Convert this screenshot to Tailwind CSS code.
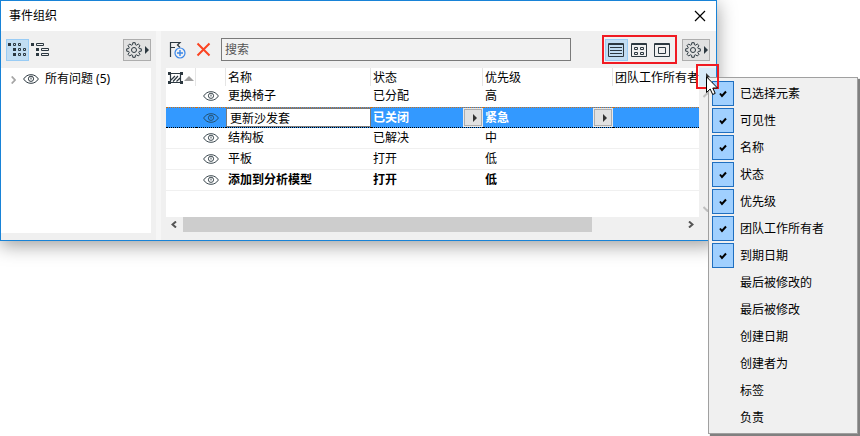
<!DOCTYPE html>
<html lang="zh-CN">
  <head>
    <meta charset="UTF-8" />
    <meta name="viewport" content="width=device-width, initial-scale=1.0" />
    <title>事件组织</title>
    <script src="https://cdn.jsdelivr.net/npm/@tailwindcss/browser@4"></script>
  </head>
  <body class="relative min-h-screen bg-white overflow-hidden font-['Noto_Sans','Noto_Sans_CJK_SC',sans-serif] text-xs text-black">
    <!-- shared icons -->
    <svg class="hidden">
      <symbol id="eye" viewBox="0 0 16 10">
        <path d="M.6 5C2.6 2 5 .7 8 .7S13.400 2 15.400 5C13.400 8 11 9.300 8 9.300S2.600 8 .6 5Z" fill="none" stroke="currentColor" />
        <circle cx="8" cy="4.800" r="2.600" fill="none" stroke="currentColor" />
        <path d="M8 3.500v2" stroke="currentColor" />
      </symbol>
      <symbol id="gear" viewBox="0 0 16 16">
        <path d="M13.300 6.600L15.300 6.800V9.200L13.300 9.400L12.800 10.700L14 12.300L12.300 14L10.700 12.800L9.400 13.300L9.200 15.300H6.800L6.600 13.300L5.300 12.800L3.700 14L2 12.300L3.200 10.700L2.700 9.400L.7 9.200V6.800L2.700 6.600L3.200 5.300L2 3.700L3.700 2L5.300 3.200L6.600 2.700L6.800 .7H9.200L9.400 2.700L10.700 3.200L12.300 2L14 3.700L12.800 5.300Z" fill="none" stroke="currentColor" stroke-linejoin="round" />
        <circle cx="8" cy="8" r="2.500" fill="none" stroke="currentColor" />
      </symbol>
      <symbol id="tri" viewBox="0 0 4 8">
        <path d="M0 0L4 4L0 8Z" fill="currentColor" />
      </symbol>
      <symbol id="check" viewBox="0 0 8 8">
        <path d="M1 3.500L3 6L7 1.500" fill="none" stroke="#000" stroke-width="2" />
      </symbol>
    </svg>

    <main class="mr-[143px] border border-[#1883d7] bg-[#f0f0f0] shadow-[0_4px_18px_rgba(0,0,0,0.4)]">
      <header class="flex h-[30px] items-center justify-between bg-white pl-2 pr-2">
        <h1>事件组织</h1>
        <button aria-label="关闭" class="p-0.5">
          <svg class="size-3" viewBox="0 0 12 12"><path d="M1 1L11 11M11 1L1 11" stroke="#000" stroke-width="1.200" /></svg>
        </button>
      </header>

      <div class="flex text-[#2c3840]">
        <!-- tree side -->
        <section class="flex w-[155px] flex-col pr-[5px]">
          <div class="flex h-[37px] items-center pl-[5px]">
            <button aria-label="树视图" class="flex h-[22px] w-[23px] items-center justify-center border border-[#99ccf5] bg-[#c2ddf2]">
              <svg class="h-[13px] w-[19px]" viewBox="0 0 19 13">
                <path d="M0 0h3v3h-3zM5 5h3v3h-3zM5 10h3v3h-3z" fill="currentColor" />
                <path d="M5.500 .5h2v2h-2zM10.500 .5h2v2h-2zM10.500 5.500h2v2h-2zM15.500 5.500h2v2h-2zM10.500 10.500h2v2h-2zM15.500 10.500h2v2h-2z" fill="none" stroke="currentColor" />
              </svg>
            </button>
            <button aria-label="列表视图" class="ml-0.5">
              <svg class="h-[13px] w-[18px]" viewBox="0 0 18 13">
                <path d="M0 0h3v3h-3zM5 5h3v3h-3zM5 10h3v3h-3z" fill="currentColor" />
                <path d="M5.500 .5h7v2h-7zM10.500 5.500h7v2h-7zM10.500 10.500h7v2h-7z" fill="none" stroke="currentColor" />
              </svg>
            </button>
            <button aria-label="树设置" class="ml-auto flex h-[22px] w-7 items-center justify-center gap-[3px] border border-[#adadad] bg-[#e1e1e1]">
              <svg class="size-4"><use href="#gear" /></svg>
              <svg class="h-2 w-1"><use href="#tri" /></svg>
            </button>
          </div>
          <div class="mb-[7px] flex-1 bg-white">
            <div class="flex h-[22px] items-center pl-2.5">
              <svg class="mt-0.5 h-2 w-[5px]" viewBox="0 0 5 8"><path d="M.7 .5L4 4L.7 7.500" fill="none" stroke="#a6a6a6" stroke-width="1.800" /></svg>
              <svg class="ml-[7px] h-2.5 w-4"><use href="#eye" /></svg>
              <span class="ml-1.5 text-black">所有问题 (5)</span>
            </div>
          </div>
        </section>

        <div class="w-[5px] bg-[#f6f6f6]"></div>

        <!-- issue list side -->
        <section class="min-w-0 flex-1 pb-2">
          <div class="flex h-[37px] items-center pl-2 pr-1.5">
            <button aria-label="新建问题">
              <svg class="h-[18px] w-[17px]" viewBox="0 0 17 18">
                <path d="M1.500 16V1.500H11L8.500 4L11 6.500M1.500 6.500H6" fill="none" stroke="currentColor" stroke-width="1.200" />
                <circle cx="11" cy="12" r="5" fill="#f0f0f0" stroke="#3a86e8" stroke-width="1.200" />
                <path d="M11 9v6M8 12h6" stroke="#3a86e8" stroke-width="1.400" />
              </svg>
            </button>
            <button aria-label="删除" class="ml-2.5">
              <svg class="size-[15px]" viewBox="0 0 15 15"><path d="M1.500 1.500L13.500 13.500M13.500 1.500L1.500 13.500" stroke="#fb4422" stroke-width="2" /></svg>
            </button>
            <input type="search" aria-label="搜索" placeholder="搜索" class="ml-2.5 h-[23px] min-w-0 flex-1 border border-[#7a7a7a] bg-[#f2f2f2] px-[3px] placeholder:text-[#555]" />
            <div class="ml-[31px] flex h-[29px] items-center border-2 border-[#f01a22] px-px">
              <button aria-label="列表" class="flex h-[22px] w-[23px] items-center justify-center border border-[#99ccf5] bg-[#c2ddf2]">
                <svg class="h-3.5 w-[17px]" viewBox="0 0 17 14">
                  <path d="M.5 .5h15v13h-15zM.5 1.500h15M2 4.500h12M2 7.500h12M2 10.500h12" fill="none" stroke="currentColor" />
                </svg>
              </button>
              <button aria-label="缩略图" class="flex w-[23px] justify-center">
                <svg class="h-3.5 w-[17px]" viewBox="0 0 17 14">
                  <path d="M.5 .5h15v13h-15zM.5 1.500h15M3.500 4.500h3v2h-3zM9.500 4.500h3v2h-3zM3.500 9.500h3v2h-3zM9.500 9.500h3v2h-3z" fill="none" stroke="currentColor" />
                </svg>
              </button>
              <button aria-label="单视图" class="flex w-[23px] justify-center">
                <svg class="h-3.5 w-[17px]" viewBox="0 0 17 14">
                  <path d="M.5 .5h15v13h-15zM.5 1.500h15M4.500 4.500h7v6h-7z" fill="none" stroke="currentColor" />
                </svg>
              </button>
            </div>
            <button aria-label="列表设置" class="ml-[5px] flex h-[22px] w-7 items-center justify-center gap-[3px] border border-[#adadad] bg-[#e1e1e1]">
              <svg class="size-4"><use href="#gear" /></svg>
              <svg class="h-2 w-1"><use href="#tri" /></svg>
            </button>
          </div>

          <div class="flex pl-[5px]">
            <div class="min-w-0 flex-1">
              <div class="bg-white pb-[26px] text-black">
                <table class="w-full table-fixed border-separate border-spacing-0 text-left leading-4 whitespace-nowrap [&_td]:h-[21px] [&_td]:p-0 [&_td]:pl-0.5 [&_th]:h-[18px] [&_th]:p-0 [&_th]:pt-0.5 [&_th]:pl-0.5 [&_th]:font-normal">
                  <colgroup>
                    <col class="w-[30px]" />
                    <col class="w-[30px]" />
                    <col class="w-[145px]" />
                    <col class="w-28" />
                    <col class="w-[130px]" />
                    <col />
                  </colgroup>
                  <thead>
                    <tr>
                      <th class="border-r border-[#e5e5e5]" aria-label="已选择元素">
                        <span class="flex items-center gap-px">
                          <svg class="h-3 w-[15px]" viewBox="0 0 15 12">
                            <path d="M2 1.500h11M2 10.500h11M2.500 2v8M12.500 2v8M3 8L7 4M5 9.500L10 4M8.500 9.500L12 6" fill="none" stroke="#2c3840" stroke-width="1.200" />
                            <path d="M0 0h3v3h-3zM12 0h3v3h-3zM0 9h3v3h-3zM12 9h3v3h-3z" fill="#2c3840" />
                          </svg>
                          <svg class="h-[5px] w-2.5" viewBox="0 0 10 5"><path d="M5 0L10 5H0Z" fill="#a0a0a0" /></svg>
                        </span>
                      </th>
                      <th class="border-r border-[#e5e5e5]" aria-label="可见性"></th>
                      <th class="border-r border-[#e5e5e5]">名称</th>
                      <th class="border-r border-[#e5e5e5]">状态</th>
                      <th class="border-r border-[#e5e5e5]">优先级</th>
                      <th>团队工作所有者</th>
                    </tr>
                  </thead>
                  <tbody>
                    <tr class="[&_td]:pb-0.5">
                      <td></td>
                      <td><svg class="ml-[5px] h-2.5 w-4 text-[#3c4950]"><use href="#eye" /></svg></td>
                      <td>更换椅子</td>
                      <td>已分配</td>
                      <td>高</td>
                      <td></td>
                    </tr>
                    <tr class="bg-[#3399ff] font-bold text-white [&_td]:border-y [&_td]:border-dotted [&_td]:border-t-[#c8701a] [&_td]:border-b-black">
                      <td></td>
                      <td><svg class="ml-[5px] h-2.5 w-4 text-[#24506f]"><use href="#eye" /></svg></td>
                      <td class="pl-0!">
                        <input type="text" aria-label="名称" value="更新沙发套" class="block h-[19px] w-full border border-[#7a7a7a] bg-white px-[3px] font-normal text-black" />
                      </td>
                      <td>
                        <div class="flex items-center justify-between pr-px">
                          已关闭
                          <button aria-label="选择状态" class="flex h-[17px] w-[18px] items-center justify-end border border-[#adadad] bg-[#e1e1e1] pr-1 text-[#333] outline outline-[#e8e8e8]"><svg class="h-2 w-1"><use href="#tri" /></svg></button>
                        </div>
                      </td>
                      <td>
                        <div class="flex items-center justify-between pr-px">
                          紧急
                          <button aria-label="选择优先级" class="flex h-[17px] w-[18px] items-center justify-end border border-[#adadad] bg-[#e1e1e1] pr-1 text-[#333] outline outline-[#e8e8e8]"><svg class="h-2 w-1"><use href="#tri" /></svg></button>
                        </div>
                      </td>
                      <td></td>
                    </tr>
                    <tr class="[&_td]:border-b [&_td]:border-[#f0f0f0]">
                      <td></td>
                      <td><svg class="ml-[5px] h-2.5 w-4 text-[#3c4950]"><use href="#eye" /></svg></td>
                      <td>结构板</td>
                      <td>已解决</td>
                      <td>中</td>
                      <td></td>
                    </tr>
                    <tr class="[&_td]:border-b [&_td]:border-[#f0f0f0]">
                      <td></td>
                      <td><svg class="ml-[5px] h-2.5 w-4 text-[#3c4950]"><use href="#eye" /></svg></td>
                      <td>平板</td>
                      <td>打开</td>
                      <td>低</td>
                      <td></td>
                    </tr>
                    <tr class="font-bold [&_td]:border-b [&_td]:border-[#f0f0f0]">
                      <td></td>
                      <td><svg class="ml-[5px] h-2.5 w-4 text-[#3c4950]"><use href="#eye" /></svg></td>
                      <td>添加到分析模型</td>
                      <td>打开</td>
                      <td>低</td>
                      <td></td>
                    </tr>
                  </tbody>
                </table>
              </div>
              <!-- horizontal scrollbar -->
              <div class="flex h-[15px] items-center pl-[5px] pr-[5px] text-[#555]">
                <svg class="mr-1.5 h-[7px] w-1.5" viewBox="0 0 6 7"><path d="M5 .5L1.500 3.500L5 6.500" fill="none" stroke="currentColor" stroke-width="2" /></svg>
                <div class="flex-1"><div class="h-[15px] w-[81%] bg-[#cdcdcd]"></div></div>
                <svg class="h-[7px] w-1.5" viewBox="0 0 6 7"><path d="M1 .5L4.500 3.500L1 6.500" fill="none" stroke="currentColor" stroke-width="2" /></svg>
              </div>
            </div>
            <div class="flex w-[17px] flex-col items-start">
              <button aria-label="显示列" class="flex h-[18px] w-full items-center bg-[#d9ebf9] pl-[7px] text-[#333]"><svg class="h-2 w-1"><use href="#tri" /></svg></button>
              <div class="flex flex-1 flex-col justify-between pt-1.5 pb-5 pl-1 text-[#bfbfbf]">
                <svg class="h-1.5 w-[9px]" viewBox="0 0 9 6"><path d="M.5 5L4.500 1L8.500 5" fill="none" stroke="currentColor" stroke-width="2" /></svg>
                <svg class="h-1.5 w-[9px]" viewBox="0 0 9 6"><path d="M.5 1L4.500 5L8.500 1" fill="none" stroke="currentColor" stroke-width="2" /></svg>
              </div>
            </div>
          </div>
        </section>
      </div>
    </main>

    <!-- column chooser menu -->
    <div class="absolute top-[77px] right-0.5 flex w-[150px] flex-col gap-0.5 border border-[#a0a0a0] bg-[#f0f0f0] p-[3px] shadow-[2px_2px_1px_#808080]">
      <label class="relative flex h-[25px] items-center gap-1.5"><input type="checkbox" checked class="peer h-[25px] w-[22px] appearance-none checked:border checked:border-[#1f6fc0] checked:bg-[#a0d0ff]" /><svg class="absolute left-[7px] hidden size-2 peer-checked:block"><use href="#check" /></svg>已选择元素</label>
      <label class="relative flex h-[25px] items-center gap-1.5"><input type="checkbox" checked class="peer h-[25px] w-[22px] appearance-none checked:border checked:border-[#1f6fc0] checked:bg-[#a0d0ff]" /><svg class="absolute left-[7px] hidden size-2 peer-checked:block"><use href="#check" /></svg>可见性</label>
      <label class="relative flex h-[25px] items-center gap-1.5"><input type="checkbox" checked class="peer h-[25px] w-[22px] appearance-none checked:border checked:border-[#1f6fc0] checked:bg-[#a0d0ff]" /><svg class="absolute left-[7px] hidden size-2 peer-checked:block"><use href="#check" /></svg>名称</label>
      <label class="relative flex h-[25px] items-center gap-1.5"><input type="checkbox" checked class="peer h-[25px] w-[22px] appearance-none checked:border checked:border-[#1f6fc0] checked:bg-[#a0d0ff]" /><svg class="absolute left-[7px] hidden size-2 peer-checked:block"><use href="#check" /></svg>状态</label>
      <label class="relative flex h-[25px] items-center gap-1.5"><input type="checkbox" checked class="peer h-[25px] w-[22px] appearance-none checked:border checked:border-[#1f6fc0] checked:bg-[#a0d0ff]" /><svg class="absolute left-[7px] hidden size-2 peer-checked:block"><use href="#check" /></svg>优先级</label>
      <label class="relative flex h-[25px] items-center gap-1.5"><input type="checkbox" checked class="peer h-[25px] w-[22px] appearance-none checked:border checked:border-[#1f6fc0] checked:bg-[#a0d0ff]" /><svg class="absolute left-[7px] hidden size-2 peer-checked:block"><use href="#check" /></svg>团队工作所有者</label>
      <label class="relative flex h-[25px] items-center gap-1.5"><input type="checkbox" checked class="peer h-[25px] w-[22px] appearance-none checked:border checked:border-[#1f6fc0] checked:bg-[#a0d0ff]" /><svg class="absolute left-[7px] hidden size-2 peer-checked:block"><use href="#check" /></svg>到期日期</label>
      <label class="relative flex h-[25px] items-center gap-1.5"><input type="checkbox" class="peer h-[25px] w-[22px] appearance-none checked:border checked:border-[#1f6fc0] checked:bg-[#a0d0ff]" /><svg class="absolute left-[7px] hidden size-2 peer-checked:block"><use href="#check" /></svg>最后被修改的</label>
      <label class="relative flex h-[25px] items-center gap-1.5"><input type="checkbox" class="peer h-[25px] w-[22px] appearance-none checked:border checked:border-[#1f6fc0] checked:bg-[#a0d0ff]" /><svg class="absolute left-[7px] hidden size-2 peer-checked:block"><use href="#check" /></svg>最后被修改</label>
      <label class="relative flex h-[25px] items-center gap-1.5"><input type="checkbox" class="peer h-[25px] w-[22px] appearance-none checked:border checked:border-[#1f6fc0] checked:bg-[#a0d0ff]" /><svg class="absolute left-[7px] hidden size-2 peer-checked:block"><use href="#check" /></svg>创建日期</label>
      <label class="relative flex h-[25px] items-center gap-1.5"><input type="checkbox" class="peer h-[25px] w-[22px] appearance-none checked:border checked:border-[#1f6fc0] checked:bg-[#a0d0ff]" /><svg class="absolute left-[7px] hidden size-2 peer-checked:block"><use href="#check" /></svg>创建者为</label>
      <label class="relative flex h-[25px] items-center gap-1.5"><input type="checkbox" class="peer h-[25px] w-[22px] appearance-none checked:border checked:border-[#1f6fc0] checked:bg-[#a0d0ff]" /><svg class="absolute left-[7px] hidden size-2 peer-checked:block"><use href="#check" /></svg>标签</label>
      <label class="relative flex h-[25px] items-center gap-1.5"><input type="checkbox" class="peer h-[25px] w-[22px] appearance-none checked:border checked:border-[#1f6fc0] checked:bg-[#a0d0ff]" /><svg class="absolute left-[7px] hidden size-2 peer-checked:block"><use href="#check" /></svg>负责</label>
    </div>

    <!-- highlight and pointer over the column button -->
    <div class="pointer-events-none absolute top-16 right-[141px] h-[25px] w-[23px] border-2 border-[#f01a22]"></div>
    <svg class="pointer-events-none absolute top-[76px] right-[142px] h-[19px] w-3" viewBox="0 0 12 19">
      <path d="M.5 .8V16.500L4.200 13L6.700 18.500L9.200 17.400L6.800 12H11.500Z" fill="#fff" stroke="#000" />
    </svg>
  </body>
</html>
